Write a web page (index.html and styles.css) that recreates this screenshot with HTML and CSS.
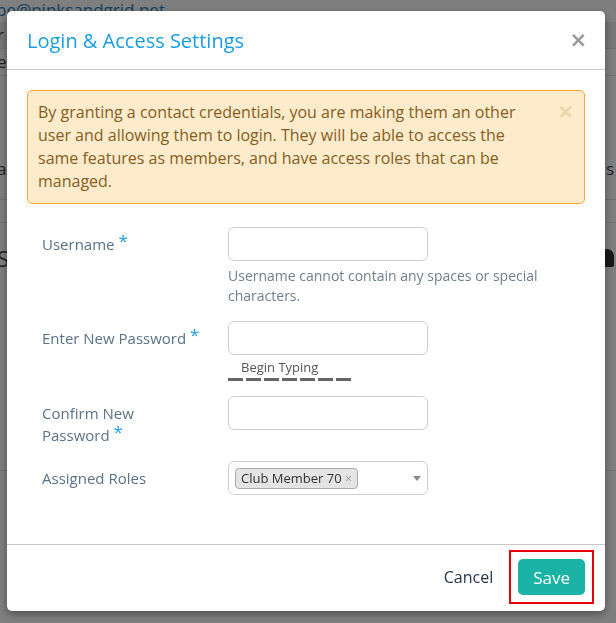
FILE: index.html
```html
<!doctype html>
<html>
<head>
    <meta charset="utf-8" />
    <meta name="viewport" content="width=device-width, initial-scale=1" />
    <title>Login &amp; Access Settings</title>
    <link rel="stylesheet" href="styles.css">
</head>
<body>
    <div class="Page">
        <div class="Page_email">pe@pinksandgrid.net</div>
        <div class="Page_row Page_row--shade">r</div>
        <div class="Page_row">e</div>
        <div class="Page_row Page_row--gap"><span>al</span><span>s</span></div>
        <div class="Page_row Page_row--thin"></div>
        <div class="Page_row Page_row--big"><span>S</span><span class="Page_user"></span></div>
    </div>

    <div class="Overlay">
        <div class="Modal">
            <div class="Modal_head">
                <h2 class="Modal_title">Login &amp; Access Settings</h2>
                <button class="Modal_close" type="button">&times;</button>
            </div>

            <div class="Modal_body">
                <div class="Alert">
                    By granting a contact credentials, you are making them an other user and allowing them to login. They will be able to access the same features as members, and have access roles that can be managed.
                    <span class="Alert_close">&times;</span>
                </div>

                <form class="Form">
                    <div class="Field">
                        <label class="Field_label" for="username_el">Username <span class="Req">*</span></label>
                        <div class="Field_ctrl">
                            <input id="username_el" class="_Input" type="text">
                            <div class="Field_help">Username cannot contain any spaces or special characters.</div>
                        </div>
                    </div>

                    <div class="Field">
                        <label class="Field_label" for="password_el">Enter New Password <span class="Req">*</span></label>
                        <div class="Field_ctrl">
                            <input id="password_el" class="_Input" type="password">
                            <div class="Strength">
                                <div class="Strength_text">Begin Typing</div>
                                <div class="Strength_bars">
                                    <span></span><span></span><span></span><span></span><span></span><span></span><span></span>
                                </div>
                            </div>
                        </div>
                    </div>

                    <div class="Field">
                        <label class="Field_label" for="confirm_el">Confirm New Password <span class="Req">*</span></label>
                        <div class="Field_ctrl">
                            <input id="confirm_el" class="_Input" type="password">
                        </div>
                    </div>

                    <div class="Field">
                        <label class="Field_label">Assigned Roles</label>
                        <div class="Field_ctrl">
                            <div class="_Input Select">
                                <span class="Tag">Club Member 70 <span class="Tag_x">&times;</span></span>
                                <span class="Select_arrow"></span>
                            </div>
                        </div>
                    </div>
                </form>
            </div>

            <div class="Modal_foot">
                <button class="Btn_link" type="button">Cancel</button>
                <span class="Highlight">
                    <button class="Btn_save" type="button">Save</button>
                </span>
            </div>
        </div>
    </div>
</body>
</html>
```

FILE: styles.css
```css
body {
    margin: 0;
    background: #fff;
    font-family: 'Open Sans', 'Noto Sans', sans-serif;
    color: #333;
}
.Page {
    height: 623px;
    overflow: hidden;
}
.Page_email {
    color: #2a7fc0;
    font-size: 17px;
    line-height: 24px;
    margin: -2px 0 0 -4px;
}
.Page_row {
    display: flex;
    justify-content: space-between;
    height: 26px;
    line-height: 26px;
    font-size: 17px;
    color: #444;
    border-bottom: 1px solid #e6e6e6;
    padding: 0 2px 0 0;
    margin-left: -3px;
}
.Page_row--shade {
    background: #eee;
}
.Page_row--gap {
    height: 60px;
    line-height: 60px;
    margin-top: 63px;
}
.Page_row--thin {
    height: 22px;
}
.Page_row--big {
    height: 247px;
    line-height: 70px;
    font-size: 22px;
}
.Page_user {
    width: 14px;
    height: 18px;
    margin-top: 26px;
    background: #333;
    border-radius: 7px 7px 2px 2px;
}

.Overlay {
    position: fixed;
    inset: 0;
    background: rgba(0, 0, 0, 0.5);
    padding: 11px 0 0 7px;
}
.Modal {
    width: 598px;
    background: #fff;
    border-radius: 5px;
    box-shadow: 0 3px 9px rgba(0, 0, 0, 0.4);
}
.Modal_head {
    display: flex;
    align-items: center;
    justify-content: space-between;
    height: 58px;
    padding: 0 18px 0 20px;
    border-bottom: 1px solid #c8c8c8;
}
.Modal_title {
    margin: 0;
    font-size: 20px;
    font-weight: 400;
    color: #1b9de2;
}
.Modal_close {
    border: 0;
    background: none;
    padding: 0;
    font-family: 'DejaVu Sans', sans-serif;
    font-size: 21px;
    font-weight: 700;
    color: #999;
    line-height: 1;
}
.Modal_body {
    padding: 20px 20px 49px;
}

.Alert {
    position: relative;
    padding: 10px 40px 10px 10px;
    background: #fdebcb;
    border: 1px solid #f7a833;
    border-radius: 5px;
    color: #865d22;
    font-size: 16px;
    line-height: 23px;
}
.Alert_close {
    position: absolute;
    top: 9px;
    right: 10px;
    font-family: 'DejaVu Sans', sans-serif;
    font-size: 20px;
    font-weight: 700;
    color: #ecd3a8;
}

.Form {
    display: flex;
    flex-direction: column;
    gap: 15px;
    margin-top: 23px;
    padding-left: 15px;
}
.Field {
    display: grid;
    grid-template-columns: 186px 1fr;
}
.Field_label {
    padding-top: 6px;
    width: 158px;
    font-size: 15px;
    line-height: 22px;
    color: #5a7288;
}
.Req {
    color: #1b9de2;
    font-size: 17px;
    vertical-align: 3px;
    line-height: 0;
}
._Input {
    display: block;
    box-sizing: border-box;
    width: 200px;
    height: 34px;
    border: 1px solid #cfcfcf;
    border-radius: 6px;
    background: #fff;
    font: inherit;
}
.Field_help {
    margin-top: 5px;
    font-size: 14px;
    line-height: 20px;
    color: #6f7f8f;
}
.Strength_text {
    margin-top: 4px;
    padding-left: 13px;
    font-size: 13px;
    line-height: 16px;
    color: #555;
}
.Strength_bars {
    display: flex;
    gap: 3px;
    margin-top: 3px;
}
.Strength_bars span {
    width: 15px;
    height: 3px;
    background: #666;
}

.Select {
    display: flex;
    align-items: center;
    justify-content: space-between;
    padding: 0 6px;
}
.Tag {
    box-sizing: border-box;
    height: 21px;
    padding: 0 5px;
    background: #e4e4e4;
    border: 1px solid #aaa;
    border-radius: 4px;
    font-size: 13px;
    line-height: 19px;
    color: #333;
}
.Tag_x {
    color: #999;
    font-size: 12px;
}
.Select_arrow {
    width: 0;
    height: 0;
    border-left: 4px solid transparent;
    border-right: 4px solid transparent;
    border-top: 5px solid #888;
}

.Modal_foot {
    display: flex;
    justify-content: flex-end;
    align-items: center;
    gap: 16px;
    padding: 5px 11px 7px;
    border-top: 1px solid #c8c8c8;
}
.Btn_link {
    border: 0;
    background: none;
    padding: 0;
    font: inherit;
    font-size: 16px;
    color: #25364a;
}
.Highlight {
    display: flex;
    padding: 7px;
    border: 2px solid #e8000b;
}
.Btn_save {
    height: 36px;
    padding: 0 15px;
    border: 0;
    border-radius: 5px;
    background: #1ab3a6;
    color: #fff;
    font: inherit;
    font-size: 17px;
}
```
